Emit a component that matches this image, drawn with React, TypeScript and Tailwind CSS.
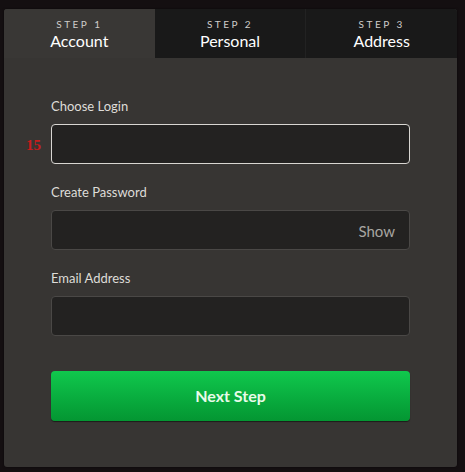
import React from 'react';

const tabs = [
  { step: 'STEP 1', label: 'Account', active: true },
  { step: 'STEP 2', label: 'Personal', active: false },
  { step: 'STEP 3', label: 'Address', active: false },
];

const Field: React.FC<{ label: string; children?: React.ReactNode }> = ({ label, children }) => (
  <div className="flex flex-col">
    <label className="text-[13px] leading-4 text-[#dedcd8] mb-[10px]">{label}</label>
    <div className="relative h-[40px] rounded-[4px] border border-[#4a4846] bg-[#232221]">{children}</div>
  </div>
);

const App: React.FC = () => {
  return (
    <div
      className="w-[465px] h-[472px] bg-[#140f11] pt-[9px] pl-[4px]"
      style={{ fontFamily: 'Lato, "Noto Sans", sans-serif' }}
    >
      <div className="w-[453px] h-[458px] rounded-[3px] bg-[#373533] overflow-hidden shadow-[0_0_2px_rgba(0,0,0,0.6)]">
        {/* Tabs */}
        <div className="flex h-[49px]">
          {tabs.map((t, i) => (
            <div
              key={t.step}
              className={
                'flex-1 flex flex-col items-center pt-[9px] ' +
                (t.active ? 'bg-[#393735]' : 'bg-[#191919]') +
                (i === 2 ? ' border-l border-[#222]' : '')
              }
            >
              <span className="text-[10px] leading-3 tracking-[0.25em] text-[#cfcdca]">{t.step}</span>
              <span className="text-[16px] leading-5 mt-[1px] text-white">{t.label}</span>
            </div>
          ))}
        </div>

        {/* Form */}
        <div className="flex flex-col gap-[20px] px-[47px] pt-[40px]">
          <div className="relative">
            <span
              className="absolute left-[-25px] top-[36px] text-[15px] font-bold text-[#c81c1c]"
              style={{ fontFamily: '"Liberation Serif", serif' }}
            >
              15
            </span>
            <div className="flex flex-col">
              <label className="text-[13px] leading-4 text-[#dedcd8] mb-[10px]">Choose Login</label>
              <div className="h-[40px] rounded-[4px] border border-[#d8d6d2] bg-[#232221]" />
            </div>
          </div>
          <Field label="Create Password">
            <span className="absolute right-[14px] top-[9px] text-[15px] text-[#a8a6a2]">Show</span>
          </Field>
          <Field label="Email Address" />
          <button className="mt-[15px] h-[50px] rounded-[4px] bg-gradient-to-b from-[#10c84d] to-[#049632] text-[16px] font-bold text-[#e8fbe9] shadow-[0_1px_1px_rgba(0,0,0,0.5)]">
            Next Step
          </button>
        </div>
      </div>
    </div>
  );
};

export default App;
